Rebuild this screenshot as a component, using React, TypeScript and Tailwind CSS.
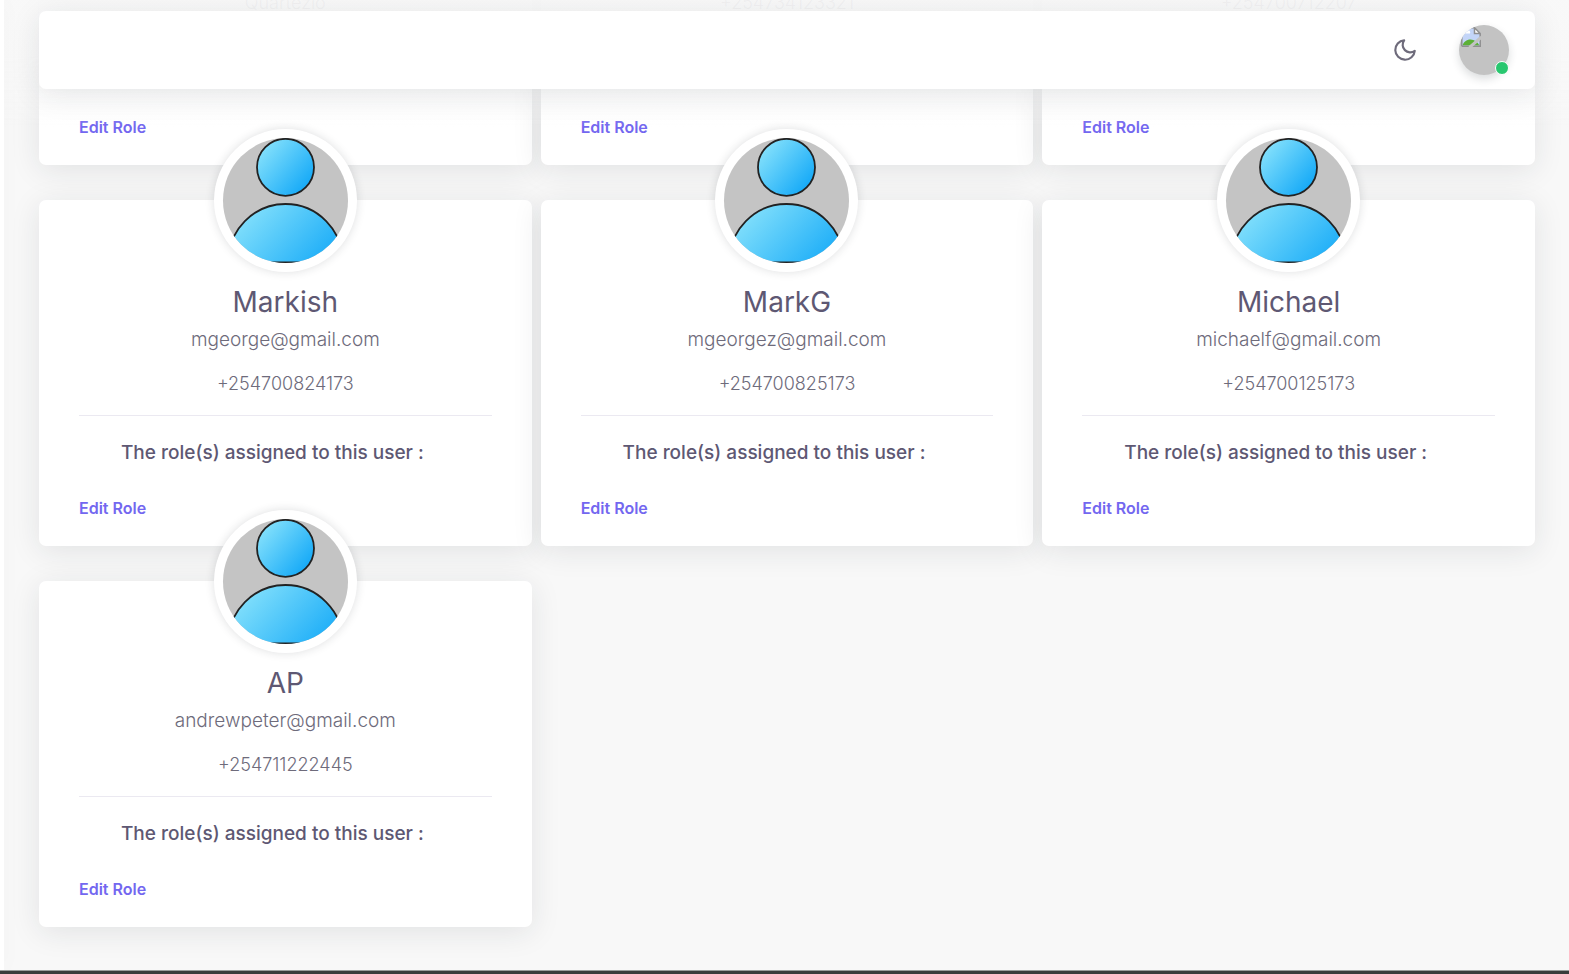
import React, { useId } from 'react'

type User = {
  name?: string
  email?: string
  phone: string
}

// The list is scrolled: only the lower part of the first three cards is on screen.
const users: User[] = [
  { phone: 'Quartezio' },
  { phone: '+254734123321' },
  { phone: '+254700712207' },
  { name: 'Markish', email: 'mgeorge@gmail.com', phone: '+254700824173' },
  { name: 'MarkG', email: 'mgeorgez@gmail.com', phone: '+254700825173' },
  { name: 'Michael', email: 'michaelf@gmail.com', phone: '+254700125173' },
  { name: 'AP', email: 'andrewpeter@gmail.com', phone: '+254711222445' }
]

function UserAvatar() {
  const id = useId()

  return (
    <div className="mx-auto -mt-[71px] h-[143px] w-[143px] rounded-full bg-white p-[9px] shadow-[0_0_10px_rgba(34,41,47,0.15)]">
      <svg viewBox="0 0 125 125" className="h-full w-full rounded-full bg-[#c4c4c4]" aria-hidden="true">
        <defs>
          <linearGradient id={`${id}-head`} x1="0" y1="0.1" x2="0.95" y2="0.9">
            <stop offset="0" stopColor="#8fe6fc" />
            <stop offset="1" stopColor="#0ca5f7" />
          </linearGradient>
          <linearGradient id={`${id}-body`} gradientUnits="userSpaceOnUse" x1="22" y1="58" x2="108" y2="138">
            <stop offset="0" stopColor="#8fe6fc" />
            <stop offset="1" stopColor="#0ca5f7" />
          </linearGradient>
        </defs>
        <circle cx="62.5" cy="29.3" r="28.5" fill={`url(#${id}-head)`} stroke="#222" strokeWidth="1.8" />
        <path d="M5 124.300a57.500 58.300 0 0 1 115 0z" fill={`url(#${id}-body)`} stroke="#222" strokeWidth="1.8" />
      </svg>
    </div>
  )
}

function UserCard({ user }: { user: User }) {
  return (
    <article className="rounded-[7px] bg-white px-10 pb-[26px] shadow-[0_5px_30px_rgba(34,41,47,0.1)]">
      {user.name && (
        <>
          <UserAvatar />
          <h3 className="mt-[14px] text-center text-[28px] leading-8 font-normal text-[#5e5873]">{user.name}</h3>
          <p className="mt-2 text-center text-[19px] leading-7 font-light text-[#6e6b7b]">{user.email}</p>
        </>
      )}
      <p className="pt-4 text-center text-[18px] leading-7 font-light text-[#6e6b7b]">{user.phone}</p>
      <hr className="mt-[17px] border-[#ebe9f1]" />
      <h5 className="mt-[23px] pr-[26px] text-center text-[19px] leading-7 font-medium text-[#5e5873]">
        The role(s) assigned to this user :
      </h5>
      <a href="#edit-role" className="mt-[29px] inline-block text-[16px] leading-6 font-semibold text-[#7367f0]">
        Edit Role
      </a>
    </article>
  )
}

function BrokenImageIcon() {
  return (
    <svg viewBox="0 0 20 20" className="mt-[2px] ml-[2px] h-5 w-5" aria-hidden="true">
      <path d="M.7.7h13L19.300 6v13.300H.7z" fill="#c3d5f8" />
      <path d="M2 6.500c0-1.600 1.300-2.500 2.600-2.300C5.300 3 7 2.700 8.200 3.600c1 .7 1.300 2 .8 2.900z" fill="#fff" />
      <path d="M1.500 18.600c1-3.600 4-6 8-6s7 2.400 9 6z" fill="#5cb037" />
      <path d="M13.500 1v5.300H19z" fill="#fff" />
      <path d="M.8 19.200V.8h12.700L19.200 6.500v12.700H.8M13.500.8v5.700h5.700" fill="none" stroke="#8f8f8f" strokeWidth="1.500" />
      <path d="M8.500 20.500L20.500 10" stroke="#c3c3c3" strokeWidth="3" />
    </svg>
  )
}

function Navbar() {
  return (
    <div className="fixed inset-x-0 top-0 z-10 ml-1 h-[127px] bg-[linear-gradient(180deg,rgba(248,248,248,0.95)_44%,rgba(248,248,248,0.46)_73%,rgba(255,255,255,0))] pt-[11px] pr-[34px] pl-[35px]">
      <nav className="flex h-[78px] items-center justify-end gap-[41px] rounded-[7px] bg-white pr-[26px] shadow-[0_5px_30px_rgba(34,41,47,0.1)]">
        <button type="button" aria-label="Toggle dark mode" className="text-[#6e6b7b]">
          <svg
            viewBox="0 0 24 24"
            className="h-[26px] w-[26px]"
            fill="none"
            stroke="currentColor"
            strokeWidth="2"
            strokeLinecap="round"
            strokeLinejoin="round"
          >
            <path d="M21 12.79A9 9 0 1 1 11.21 3 7 7 0 0 0 21 12.79z" />
          </svg>
        </button>
        <button type="button" aria-label="Account" className="relative h-[50px] w-[50px]">
          <span className="flow-root h-full w-full overflow-hidden rounded-full bg-[#c3c3c3] shadow-[0_4px_8px_rgba(34,41,47,0.16)]">
            <BrokenImageIcon />
          </span>
          <span className="absolute right-0 bottom-0 h-[14px] w-[14px] rounded-full border border-white bg-[#28c76f]" />
        </button>
      </nav>
    </div>
  )
}

export default function App() {
  return (
    <div className="flex min-h-screen flex-col bg-[#f8f8f8] font-['Inter','Liberation_Sans',sans-serif]">
      <Navbar />
      <div className="flex flex-1">
        <aside className="relative z-20 w-1 bg-white shadow-[0_0_19px_rgba(34,41,47,0.06)]" />
        <main className="flex-1 overflow-hidden pr-[34px] pb-[43px] pl-[35px]">
          <div className="-mt-[27px] grid grid-cols-3 gap-x-[9px] gap-y-[35px]">
            {users.map((user) => (
              <UserCard key={user.phone} user={user} />
            ))}
          </div>
        </main>
      </div>
      <div className="relative z-20 h-[5px] border-t border-b border-t-[#9a9d9b] border-b-[#1c1c1c] bg-[#3a3c3b]" />
    </div>
  )
}
